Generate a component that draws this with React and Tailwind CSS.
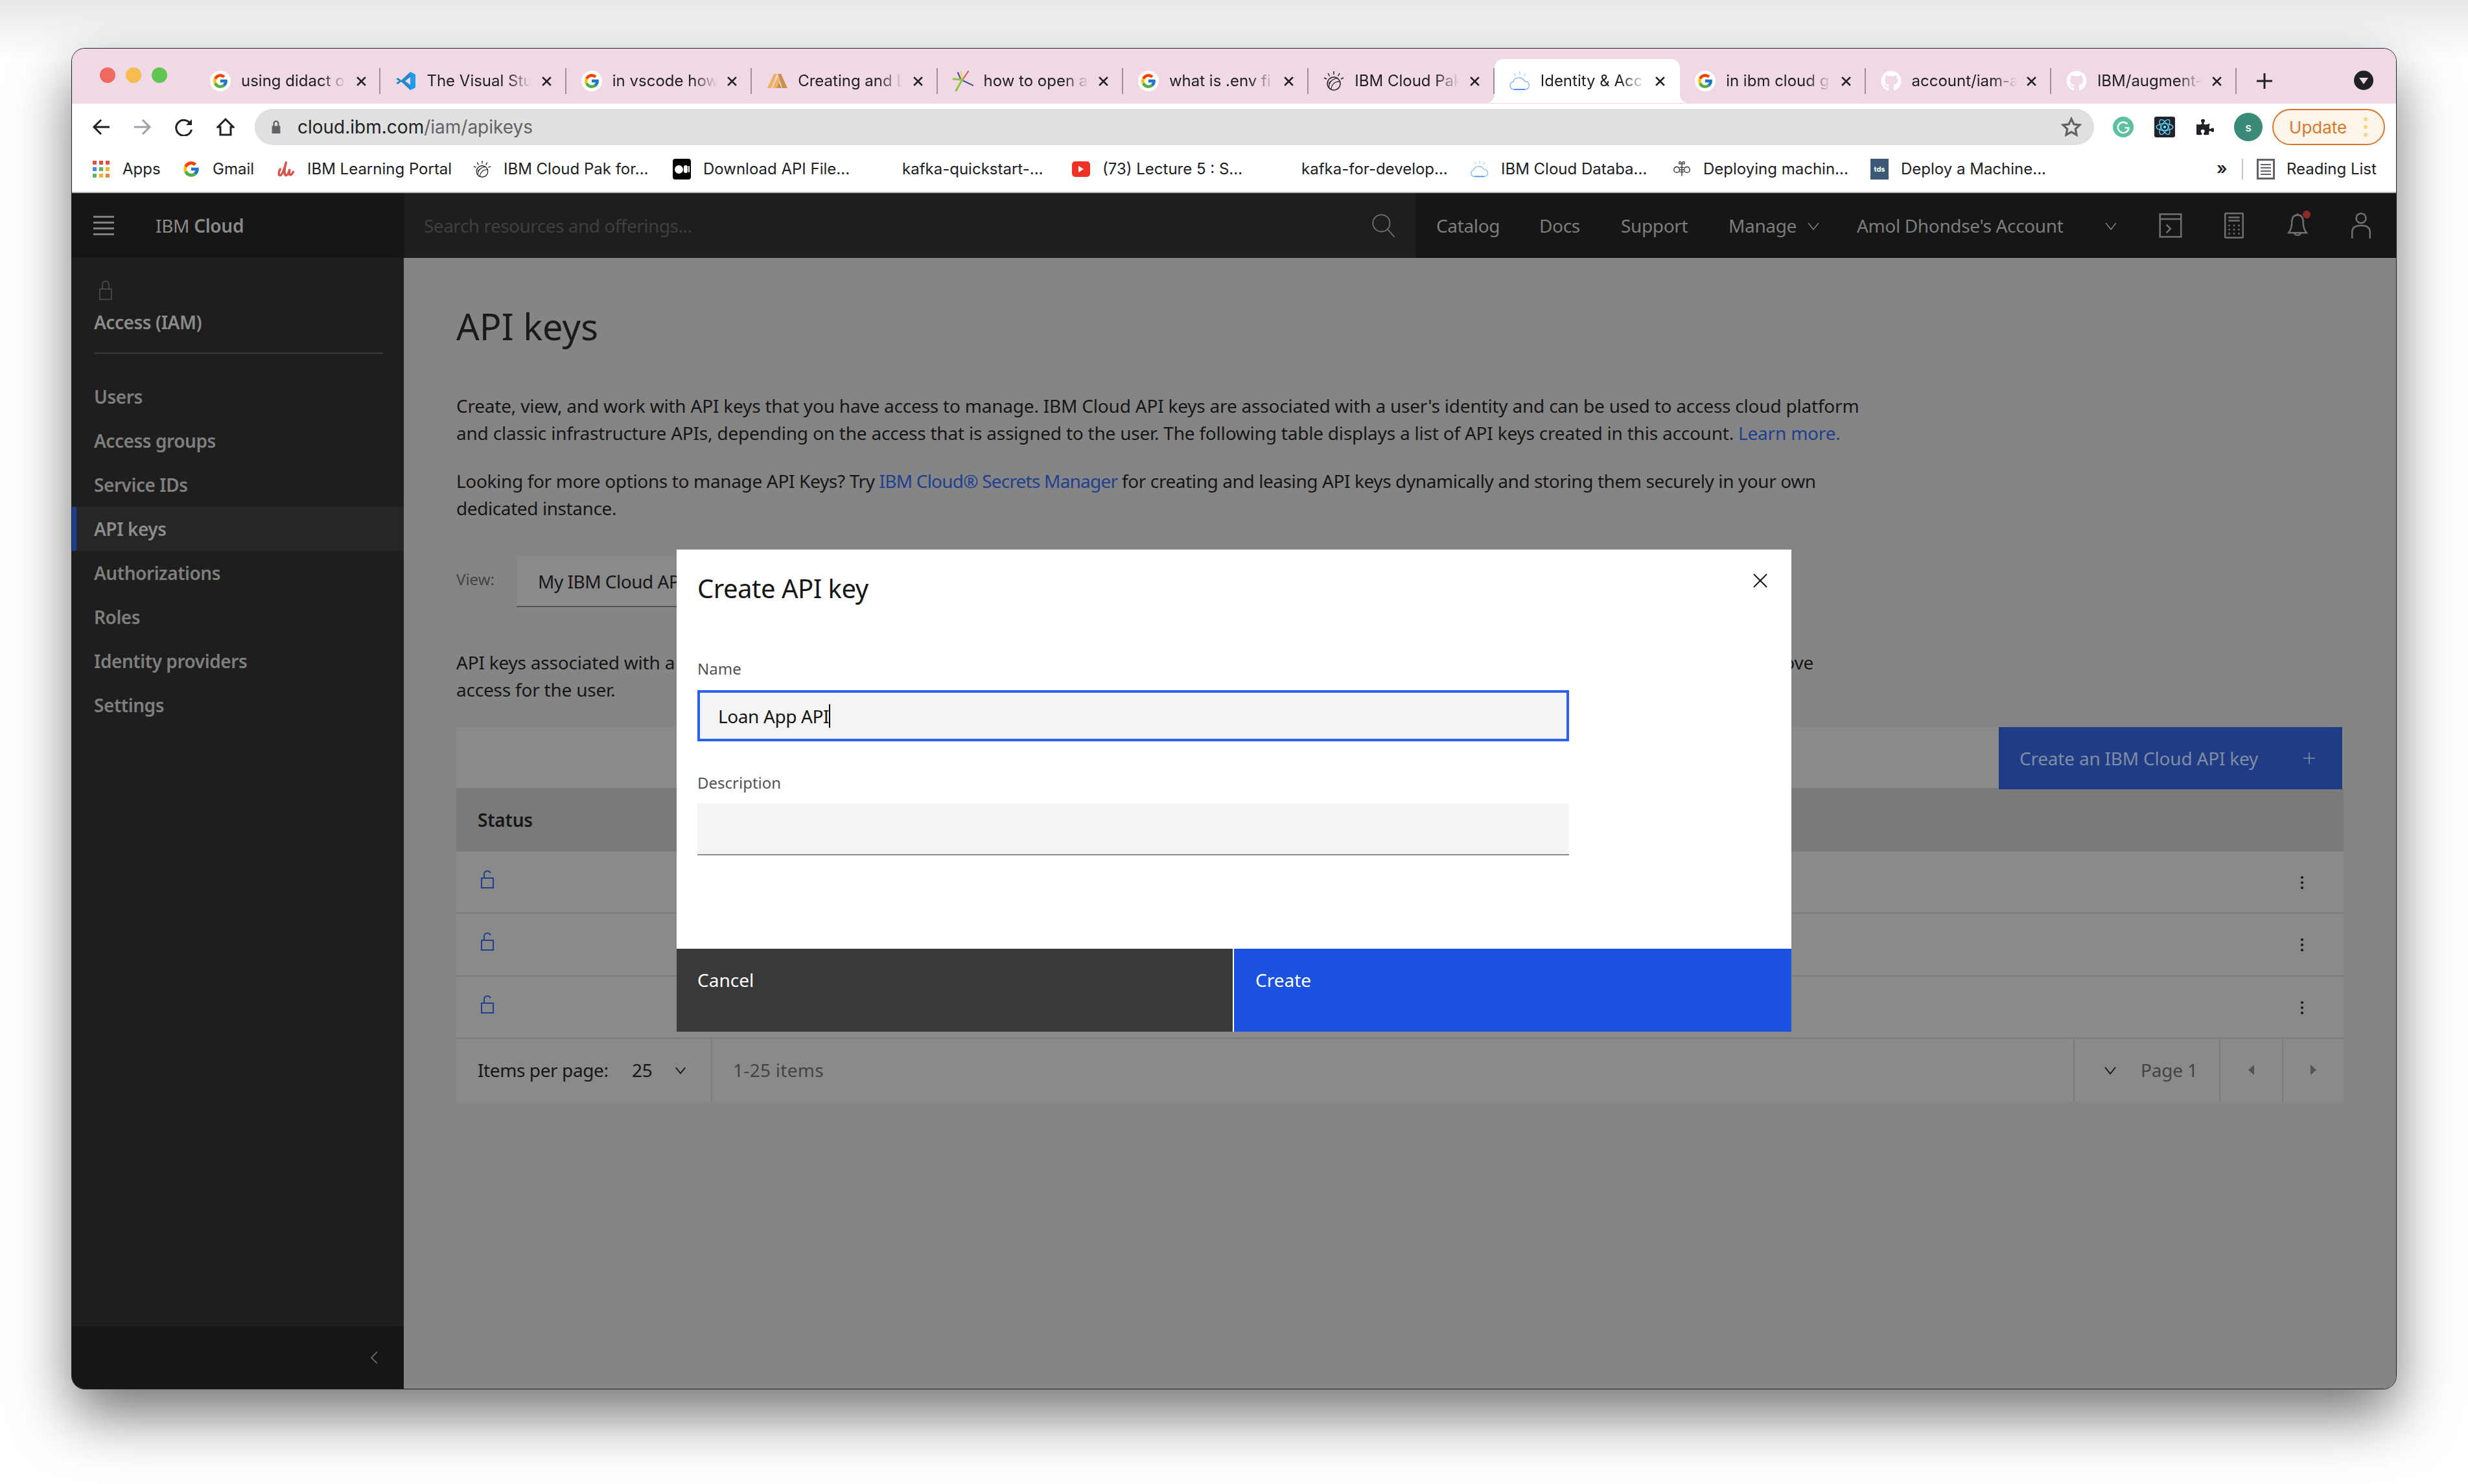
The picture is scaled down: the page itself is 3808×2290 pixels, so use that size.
import React from "react";
import { FcGoogle } from "react-icons/fc";
import { FaGithub, FaPuzzlePiece } from "react-icons/fa";

const plex = "font-['Noto_Sans',sans-serif]";
const chrome = "font-['Inter',sans-serif]";

const tabs = [
  { title: "using didact o", icon: "google" },
  { title: "The Visual Stu", icon: "vscode" },
  { title: "in vscode how", icon: "google" },
  { title: "Creating and L", icon: "alloy" },
  { title: "how to open a", icon: "spark" },
  { title: "what is .env fi", icon: "google" },
  { title: "IBM Cloud Pak", icon: "bee" },
  { title: "Identity & Acc", icon: "cloud", active: true },
  { title: "in ibm cloud g", icon: "google" },
  { title: "account/iam-a", icon: "github" },
  { title: "IBM/augment-", icon: "github" },
];

const bookmarks = [
  { title: "Apps", icon: "apps", w: "w-[139px]" },
  { title: "Gmail", icon: "gplain", w: "w-[146px]" },
  { title: "IBM Learning Portal", icon: "learn", w: "w-[303px]" },
  { title: "IBM Cloud Pak for...", icon: "bee", w: "w-[308px]" },
  { title: "Download API File...", icon: "medium", w: "w-[307px]" },
  { title: "kafka-quickstart-...", icon: "none", w: "w-[309px]" },
  { title: "(73) Lecture 5 : S...", icon: "youtube", w: "w-[307px]" },
  { title: "kafka-for-develop...", icon: "none", w: "w-[308px]" },
  { title: "IBM Cloud Databa...", icon: "cloud", w: "w-[312px]" },
  { title: "Deploying machin...", icon: "hive", w: "w-[305px]" },
  { title: "Deploy a Machine...", icon: "tds", w: "w-[480px]" },
];

const sideItems = ["Users", "Access groups", "Service IDs", "API keys", "Authorizations", "Roles", "Identity providers", "Settings"];

function Bee({ className = "w-8 h-8" }) {
  return (
    <svg viewBox="0 0 32 32" className={className} fill="none" stroke="#222" strokeWidth="1.5">
      <circle cx="16" cy="20" r="10" />
      <path d="M9 27c-2-6 3-14 12-15M12 29c0-6 5-13 13-12M8 20c3-4 7-7 12-8" strokeWidth="1.2" />
      <path d="M16 1v5M7 4l2.5 4.5M25 4l-2.5 4.5M1 11l4 2M31 11l-4 2" />
    </svg>
  );
}

function Cloud({ className = "w-8 h-8" }) {
  return (
    <svg viewBox="0 0 32 32" className={className} fill="none" strokeWidth="1.4">
      <path d="M7 29c-4 0-6-2.500-6-6 0-3 2-5 4.500-5.500C7 13 11 10.500 15.500 11c3.500.4 6.500 2.500 8 5.500 4-.4 7 2.500 7 6s-2.500 6.500-6 6.500z" stroke="#7fb8f5" />
      <path d="M7 29h17" stroke="#4a90f0" strokeWidth="2" />
      <path d="M16 1v5M7 4l2.500 4M25 4l-2.500 4" stroke="#8de0e8" />
    </svg>
  );
}

function Favicon({ name }) {
  if (name === "google")
    return (
      <span className="w-8 h-8 rounded-full bg-white flex items-center justify-center">
        <FcGoogle className="w-[26px] h-[26px]" />
      </span>
    );
  if (name === "gplain") return <FcGoogle className="w-7 h-7" />;
  if (name === "vscode")
    return (
      <svg viewBox="0 0 32 32" className="w-8 h-8">
        <path d="M23 2l8 4v20l-8 4L9 17l-5 4-3-2 5-3-5-3 3-2 5 4z" fill="#2489ca" />
        <path d="M23 2l8 4v20l-8 4z" fill="#1f9cf0" />
        <path d="M23 10l-8 6 8 6z" fill="#f0d8e4" />
      </svg>
    );
  if (name === "alloy")
    return (
      <svg viewBox="0 0 32 32" className="w-8 h-8">
        <path d="M1 27L11 5h5L7 27z" fill="#eeb062" />
        <path d="M9 27l8-18 3 7-5 11z" fill="#eeb062" />
        <path d="M17 5h5l10 22h-8z" fill="#c98f4d" />
        <path d="M15 27l4-9 4 9z" fill="#c98f4d" />
      </svg>
    );
  if (name === "spark")
    return (
      <svg viewBox="0 0 32 32" className="w-8 h-8" fill="none" strokeLinecap="round">
        <path d="M13 15L8 3" stroke="#4a4a9a" strokeWidth="2" />
        <path d="M14 15L13 1" stroke="#e8cf5a" strokeWidth="2" />
        <path d="M15 14L24 1" stroke="#d9534f" strokeWidth="2" />
        <path d="M15 15L32 23" stroke="#4a4a9a" strokeWidth="2" />
        <path d="M16 14L1 13" stroke="#8cc63f" strokeWidth="3" />
        <path d="M14 15L5 31" stroke="#8cc63f" strokeWidth="3" />
      </svg>
    );
  if (name === "bee") return <Bee />;
  if (name === "cloud") return <Cloud />;
  if (name === "github") return <FaGithub className="w-8 h-8 text-white" />;
  if (name === "apps")
    return (
      <svg viewBox="0 0 28 28" className="w-7 h-7">
        {[
          ["#e0503e", "#e0503e", "#e0503e"],
          ["#4b86e8", "#5cb85c", "#f0b429"],
          ["#5cb85c", "#f0b429", "#e8873a"],
        ].map((row, y) =>
          row.map((c, x) => <rect key={x + "-" + y} x={1 + x * 10} y={1 + y * 10} width="6" height="6" fill={c} />)
        )}
      </svg>
    );
  if (name === "learn")
    return (
      <svg viewBox="0 0 32 32" className="w-8 h-8" fill="none" stroke="#d9534f" strokeWidth="4" strokeLinecap="round">
        <path d="M6 16c-3 6-3 11 0 11 4 0 8-14 11-24-3 8-5 22-1 24 3 1 6-8 7-11-1 5-2 10 1 10 2 0 4-3 5-5" />
      </svg>
    );
  if (name === "medium")
    return (
      <span className="w-8 h-8 rounded bg-black flex items-center justify-center gap-[1px]">
        <span className="w-[13px] h-[13px] rounded-full bg-white" />
        <span className="w-[6px] h-[12px] rounded-full bg-white" />
        <span className="w-[2px] h-[10px] rounded-full bg-white" />
      </span>
    );
  if (name === "youtube")
    return (
      <span className="w-7 h-[24px] rounded-[5px] bg-[#ee3124] flex items-center justify-center">
        <span className="w-0 h-0 border-y-[5px] border-y-transparent border-l-[8px] border-l-white" />
      </span>
    );
  if (name === "hive")
    return (
      <svg viewBox="0 0 32 32" className="w-7 h-7" fill="none" stroke="#333" strokeWidth="1.6">
        <circle cx="7" cy="17" r="5" />
        <circle cx="25" cy="17" r="5" />
        <path d="M12 13h8M12 17h8M12 21h8M16 6v22" />
        <circle cx="13" cy="5" r="2" />
        <circle cx="19" cy="5" r="2" />
      </svg>
    );
  if (name === "tds")
    return <span className="w-8 h-8 bg-[#3c5876] text-white text-[11px] font-bold flex items-center justify-center">tds</span>;
  return null;
}

function Tab({ tab }) {
  return (
    <div
      className={
        tab.active
          ? "relative w-[286.400px] h-[68px] mt-[16px] rounded-t-[14px] bg-white flex items-center before:absolute before:-left-[14px] before:bottom-0 before:w-[14px] before:h-[14px] before:bg-[radial-gradient(circle_at_0_0,#f0d8e4_14px,#ffffff_14.500px)] after:absolute after:-right-[14px] after:bottom-0 after:w-[14px] after:h-[14px] after:bg-[radial-gradient(circle_at_100%_0,#f0d8e4_14px,#ffffff_14.500px)]"
          : "w-[286.400px] h-[68px] mt-[16px] flex items-center"
      }
    >
      <span className="w-[71px] pl-[23px] shrink-0 flex items-center">
        <Favicon name={tab.icon} />
      </span>
      <span className="w-[165px] shrink-0 overflow-hidden whitespace-nowrap text-[24px] text-[#202124] [mask-image:linear-gradient(to_right,black_75%,transparent_98%)]">
        {tab.title}
      </span>
      <span className="w-[26px] ml-[7px] shrink-0 flex justify-center">
        <svg viewBox="0 0 16 16" className="w-[17px] h-[17px]" stroke="#202124" strokeWidth="2.600">
          <path d="M2 2l12 12M14 2L2 14" />
        </svg>
      </span>
      <span className="flex-1" />
      {!tab.active && <span className="w-[2px] h-[40px] bg-[#a08f99] shrink-0" />}
    </div>
  );
}

function ThinIcon({ children, className = "w-10 h-10", color = "#707070", sw = 2 }) {
  return (
    <svg viewBox="0 0 32 32" className={className} fill="none" stroke={color} strokeWidth={sw}>
      {children}
    </svg>
  );
}

function Chevron({ className = "w-5 h-5", color = "#808080", sw = 1.500 }) {
  return (
    <svg viewBox="0 0 20 20" className={className} fill="none" stroke={color} strokeWidth={sw}>
      <path d="M2 6l8 10 8-10" />
    </svg>
  );
}

function UnlockIcon() {
  return (
    <svg viewBox="0 0 20 28" className="w-5 h-[28px]" fill="none" stroke="#1f3f8f" strokeWidth="2">
      <rect x="1" y="12" width="18" height="15" />
      <path d="M5 12V6c0-3 2-5 5-5 2.500 0 4 1.200 4.700 3" />
    </svg>
  );
}

function Kebab() {
  return (
    <span className="flex flex-col gap-[4px] mt-[10px]">
      <span className="w-1 h-1 rounded-full bg-[#161616]" />
      <span className="w-1 h-1 rounded-full bg-[#161616]" />
      <span className="w-1 h-1 rounded-full bg-[#161616]" />
    </span>
  );
}

export default function App() {
  return (
    <div className="w-[3808px] h-[2290px] bg-white overflow-hidden pt-[75px] pl-[111px] bg-gradient-to-b from-[#e8e8e8] to-white to-[4%]">
      <div className="relative w-[3586px] h-[2068px] rounded-[20px] overflow-hidden flex flex-col shadow-[0_40px_90px_rgba(0,0,0,0.55)] ring-1 ring-[#222]">
        {/* tab strip */}
        <div className={`${chrome} h-[85px] bg-[#f0d8e4] flex shrink-0`}>
          <div className="w-[190px] h-[85px] pl-[43px] flex items-center gap-[16px] pb-[4px]">
            <span className="w-6 h-6 rounded-full bg-[#f0695e]" />
            <span className="w-6 h-6 rounded-full bg-[#f5bd4f]" />
            <span className="w-6 h-6 rounded-full bg-[#61c554]" />
          </div>
          {tabs.map((t, i) => (
            <Tab key={i} tab={t} />
          ))}
          <span className="ml-[31px] mt-[38px] h-[24px] w-[24px] flex items-center justify-center">
            <svg viewBox="0 0 24 24" className="w-6 h-6" stroke="#202124" strokeWidth="3">
              <path d="M12 0v24M0 12h24" />
            </svg>
          </span>
          <span className="ml-[126px] mt-[34px] w-[30px] h-[30px] rounded-full bg-[#202124] flex items-center justify-center">
            <span className="w-0 h-0 border-x-[7px] border-x-transparent border-t-[10px] border-t-[#f0d8e4] mt-[2px]" />
          </span>
        </div>

        {/* address bar */}
        <div className={`${chrome} h-[72px] bg-white flex items-center shrink-0`}>
          <div className="w-[282px] pl-[31px] flex items-center gap-[36px]">
            <svg viewBox="0 0 28 28" className="w-7 h-7" fill="none" stroke="#202124" strokeWidth="3">
              <path d="M27 14H3M14 3L3 14l11 11" />
            </svg>
            <svg viewBox="0 0 28 28" className="w-7 h-7" fill="none" stroke="#9aa0a6" strokeWidth="3">
              <path d="M1 14h24M14 3l11 11-11 11" />
            </svg>
            <svg viewBox="0 0 28 28" className="w-7 h-7" fill="none" stroke="#202124" strokeWidth="3">
              <path d="M24 9a12 12 0 1 0 1.500 9" />
              <path d="M26 2v9H17z" fill="#202124" stroke="none" />
            </svg>
            <svg viewBox="0 0 28 28" className="w-7 h-7" fill="none" stroke="#202124" strokeWidth="3">
              <path d="M14 2L2 14h4v12h16V14h4z" />
            </svg>
          </div>
          <div className="w-[2838px] h-[56px] rounded-full bg-[#e0e0e0] flex items-center pl-[25px] pr-[19px]">
            <svg viewBox="0 0 16 24" className="w-[16px] h-[22px] mr-[25px]" fill="#5f6368">
              <path d="M3 10V6a5 5 0 0 1 10 0v4h2v13H1V10zM5.500 10h5V6a2.500 2.500 0 0 0-5 0z" />
            </svg>
            <span className="text-[28px] text-[#202124] whitespace-nowrap">
              cloud.ibm.com<span className="text-[#5f6368]">/iam/apikeys</span>
            </span>
            <svg viewBox="0 0 24 24" className="w-8 h-8 ml-auto" fill="none" stroke="#5f6368" strokeWidth="2.400">
              <path d="M12 2.500l2.900 6.300 6.800.8-5 4.700 1.300 6.800-6-3.400-6 3.400 1.300-6.800-5-4.700 6.800-.8z" />
            </svg>
          </div>
          <div className="flex items-center w-[449px] pl-[29px]">
            <span className="w-8 h-8 rounded-full bg-[#5cc29d] flex items-center justify-center">
              <svg viewBox="0 0 20 20" className="w-[22px] h-[22px]" fill="none" stroke="#fff" strokeWidth="2.200">
                <path d="M16 6a7.500 7.500 0 1 0 1.500 6M17.500 15v-4H12" />
              </svg>
            </span>
            <span className="ml-[32px] w-8 h-8 rounded-[3px] bg-[#20232a] flex items-center justify-center">
              <svg viewBox="-12 -12 24 24" className="w-7 h-7" fill="none" stroke="#61dafb" strokeWidth="1.100">
                <ellipse rx="11" ry="4.500" />
                <ellipse rx="11" ry="4.500" transform="rotate(60)" />
                <ellipse rx="11" ry="4.500" transform="rotate(120)" />
                <circle r="2" fill="#61dafb" stroke="none" />
              </svg>
            </span>
            <FaPuzzlePiece className="ml-[33px] w-7 h-7 text-[#202124]" />
            <span className="ml-[31px] w-11 h-11 rounded-full bg-[#3b8a78] text-white text-[18px] font-medium flex items-center justify-center">s</span>
            <span className="ml-[15px] w-[175px] h-[56px] rounded-full border-2 border-[#d9772b] bg-[#fdf4ea] flex items-center pl-[24px] text-[26px] text-[#d9772b]">
              Update
              <span className="ml-[26px] flex flex-col gap-[6px]">
                <span className="w-[6px] h-[6px] rounded-full bg-[#f8d77a]" />
                <span className="w-[6px] h-[6px] rounded-full bg-[#f8d77a]" />
                <span className="w-[6px] h-[6px] rounded-full bg-[#f8d77a]" />
              </span>
            </span>
          </div>
        </div>

        {/* bookmarks */}
        <div className={`${chrome} h-[66px] bg-white flex items-center pl-[31px] pb-[6px] text-[24px] text-[#202124] border-b-2 border-[#b5b5b5] shrink-0`}>
          {bookmarks.map((b, i) => (
            <div key={i} className={`${b.w} flex items-center whitespace-nowrap shrink-0`}>
              <span className="w-7 h-8 mr-[19px] flex items-center justify-center shrink-0">
                <Favicon name={b.icon} />
              </span>
              {b.title}
            </div>
          ))}
          <span className="w-[28px] ml-[54px] text-[26px] font-semibold mb-[4px]">»</span>
          <span className="ml-[11px] w-[2px] h-[32px] bg-[#c4c4c4] shrink-0" />
          <span className="ml-[21px] w-[28px] h-[32px] border-[3px] border-[#5f6368] flex flex-col justify-center gap-[3px] px-[3px] shrink-0">
            <span className="h-[2px] bg-[#5f6368]" />
            <span className="h-[2px] bg-[#5f6368]" />
            <span className="h-[2px] bg-[#5f6368]" />
            <span className="h-[2px] bg-[#5f6368]" />
          </span>
          <span className="ml-[18px] whitespace-nowrap">Reading List</span>
        </div>

        {/* ibm cloud header */}
        <div className={`${plex} h-[100px] flex shrink-0 text-[28px] text-[#7d7d7d] bg-[#161616]`}>
          <div className="w-[513px] flex items-center pl-[33px]">
            <span className="flex flex-col gap-[6px] w-8">
              <span className="h-[3px] bg-[#808080]" />
              <span className="h-[3px] bg-[#808080]" />
              <span className="h-[3px] bg-[#808080]" />
              <span className="h-[3px] bg-[#808080]" />
            </span>
            <span className="ml-[64px] text-[#8a8a8a] tracking-[-0.3px]">
              IBM <span className="font-semibold">Cloud</span>
            </span>
          </div>
          <div className="w-[1560px] bg-[#1e1e1e] flex items-center pl-[30px] pr-[30px] justify-between">
            <span className="text-[#3f3f3f] tracking-[-0.5px]">Search resources and offerings...</span>
            <ThinIcon className="w-[38px] h-[38px]" sw={1.500}>
              <circle cx="13" cy="13" r="11" />
              <path d="M21 21l9 10" />
            </ThinIcon>
          </div>
          <div className="flex items-center flex-1 pl-[32px] tracking-[-0.35px]">
            <span className="w-[159px]">Catalog</span>
            <span className="w-[126px]">Docs</span>
            <span className="w-[166px]">Support</span>
            <span className="w-[198px] flex items-center whitespace-nowrap">
              Manage
              <Chevron className="ml-[16px] w-5 h-5" />
            </span>
            <span className="w-[435px] flex items-center whitespace-nowrap relative">
              Amol Dhondse's Account
              <Chevron className="absolute left-[382px] w-5 h-5" />
            </span>
            <span className="w-[98px] flex justify-center">
              <ThinIcon>
                <rect x="3" y="2" width="26" height="28" />
                <path d="M3 8h26M11 15l5 5-5 5" />
              </ThinIcon>
            </span>
            <span className="w-[98px] flex justify-center">
              <ThinIcon>
                <rect x="5" y="1" width="22" height="30" rx="1" />
                <path d="M9 6h14M9 10h14" />
                <path d="M9 16h2M15 16h2M21 16h2M9 21h2M15 21h2M21 21h2M9 26h2M15 26h2M21 26h2" />
              </ThinIcon>
            </span>
            <span className="w-[98px] flex justify-center relative">
              <ThinIcon>
                <path d="M16 3c-5 0-7 4-7 9 0 6-1 9-4 13h22c-3-4-4-7-4-13 0-5-2-9-7-9zM16 1v2M12 25c0 4 8 4 8 0" />
              </ThinIcon>
              <span className="absolute top-[-3px] left-[57px] w-[12px] h-[12px] rounded-full bg-[#8e2a25]" />
            </span>
            <span className="w-[98px] flex justify-center">
              <ThinIcon>
                <circle cx="16" cy="7" r="6" />
                <path d="M5 32v-8c0-6 5-8 11-8s11 2 11 8v8" />
              </ThinIcon>
            </span>
          </div>
        </div>

        <div className={`${plex} flex flex-1 min-h-0`}>
          {/* side nav */}
          <aside className="w-[513px] bg-[#1e1e1e] flex flex-col text-[28px] font-semibold tracking-[-0.45px] text-[#7f7f7f]">
            <div className="pl-[34px] pr-[32px] pt-[35px]">
              <svg viewBox="0 0 20 30" className="w-5 h-[30px] ml-[8px]" fill="none" stroke="#444" strokeWidth="2">
                <rect x="1" y="13" width="18" height="16" />
                <path d="M5 13V6c0-3 2-5 5-5s5 2 5 5v7" />
              </svg>
              <div className="mt-[16px] leading-[36px] text-[#8c8c8c]">Access (IAM)</div>
              <div className="mt-[29px] h-[2px] bg-[#3a3a3a]" />
            </div>
            <nav className="mt-[32px]">
              {sideItems.map((s) => (
                <div
                  key={s}
                  className={
                    s === "API keys"
                      ? "h-[68px] flex items-center bg-[#262626] border-l-[7px] border-[#1d3f8f] pl-[27px] text-[#8c8c8c]"
                      : "h-[68px] flex items-center pl-[34px]"
                  }
                >
                  {s}
                </div>
              ))}
            </nav>
            <div className="mt-auto h-[96px] bg-[#161616] flex items-center justify-end pr-[40px]">
              <svg viewBox="0 0 12 20" className="w-3 h-5" fill="none" stroke="#7a7a7a" strokeWidth="1.500">
                <path d="M11 1L2 10l9 9" />
              </svg>
            </div>
          </aside>

          {/* page */}
          <main className="flex-1 bg-[#858585] pl-[81px] pr-[81px] pt-[70px] text-[#161616] text-[28px] leading-[42px] tracking-[-0.21px]">
            <h1 className="text-[56px] leading-[70px] font-normal tracking-normal text-[#1a1a1a]">API keys</h1>
            <p className="mt-[67px] whitespace-nowrap">
              Create, view, and work with API keys that you have access to manage. IBM Cloud API keys are associated with a user's identity and can be used to access cloud platform
              <br />
              and classic infrastructure APIs, depending on the access that is assigned to the user. The following table displays a list of API keys created in this account.{" "}
              <span className="text-[#1f3f8f]">Learn more.</span>
            </p>
            <p className="mt-[32px] whitespace-nowrap tracking-[-0.41px]">
              <span className="tracking-[-0.35px]">Looking for more options to manage API Keys? Try </span>
              <span className="text-[#1f3f8f] tracking-[-0.79px]">IBM Cloud® Secrets Manager</span> for creating and leasing API keys dynamically and storing them securely in your own
              <br />
              dedicated instance.
            </p>
            <div className="mt-[53px] flex">
              <span className="w-[93px] text-[24px] leading-[72px] tracking-normal text-[#444]">View:</span>
              <div className="w-[300px] h-[79px] bg-[#8a8a8a] border-b-2 border-[#555] pl-[33px] flex items-center whitespace-nowrap tracking-[-0.5px]">
                My IBM Cloud AP
              </div>
            </div>
            <div className="mt-[64px] w-[2094px]">
              <div className="flex justify-between whitespace-nowrap">
                <span>API keys associated with a</span>
                <span>ove</span>
              </div>
              <div>access for the user.</div>
            </div>

            {/* table */}
            <div className="mt-[37px] w-[2912px]">
              <div className="h-[94px] bg-[#8a8a8a] flex justify-end pr-[2px]">
                <div className="relative z-10 w-[530px] h-[96px] bg-[#1f3c85] flex items-center pl-[32px] text-[#808da5]">
                  Create an IBM Cloud API key
                  <span className="absolute left-[470px] w-[18px] h-[18px]">
                    <svg viewBox="0 0 18 18" className="w-[18px] h-[18px]" stroke="#808da5" strokeWidth="1.600">
                      <path d="M9 0v18M0 9h18" />
                    </svg>
                  </span>
                </div>
              </div>
              <div className="h-[98px] bg-[#7a7a7a] flex items-center pl-[33px] font-semibold text-[#161616]">Status</div>
              {[0, 1, 2].map((i) => (
                <div key={i} className="h-[96.330px] bg-[#8a8a8a] border-b-2 border-[#7c7c7c] flex items-center justify-between pl-[38px] pr-[62px] pb-[8px]">
                  <UnlockIcon />
                  <Kebab />
                </div>
              ))}
              <div className="h-[97px] bg-[#8a8a8a] flex items-center">
                <div className="w-[395px] h-full flex items-center pl-[33px] border-r-2 border-[#7c7c7c]">
                  <span className="whitespace-nowrap tracking-[-0.4px]">Items per page:</span>
                  <span className="absolute left-[864px]">25</span>
                  <Chevron className="absolute left-[930px] w-[18px] h-[18px]" color="#161616" sw={2} />
                </div>
                <span className="ml-[32px] text-[#444] tracking-[0.3px]">1-25 items</span>
                <div className="ml-auto h-full flex items-center text-[#444]">
                  <div className="w-[225px] h-full border-l-2 border-[#7c7c7c] flex items-center pl-[45px]">
                    <Chevron className="w-5 h-5 mr-[37px] shrink-0" color="#161616" sw={2} />
                    <span className="whitespace-nowrap">Page 1</span>
                  </div>
                  <div className="w-[97px] h-full border-l-2 border-[#7c7c7c] flex items-center justify-center">
                    <span className="w-0 h-0 border-y-[8px] border-y-transparent border-r-[9px] border-r-[#555]" />
                  </div>
                  <div className="w-[95px] h-full border-l-2 border-[#7c7c7c] flex items-center justify-center">
                    <span className="w-0 h-0 border-y-[8px] border-y-transparent border-l-[9px] border-l-[#555]" />
                  </div>
                </div>
              </div>
            </div>
          </main>
        </div>

        {/* modal */}
        <div className={`${plex} absolute z-20 left-[933px] top-[773px] w-[1720px] h-[744px] bg-white flex flex-col text-[#161616]`}>
          <button className="absolute left-[1661px] top-[37px] w-[22px] h-[22px]">
            <svg viewBox="0 0 22 22" className="w-[22px] h-[22px]" stroke="#161616" strokeWidth="2">
              <path d="M1 1l20 20M21 1L1 21" />
            </svg>
          </button>
          <div className="pl-[32px] pt-[36px]">
            <h2 className="text-[40px] leading-[48px] font-normal tracking-[-0.5px]">Create API key</h2>
            <label className="block mt-[84px] text-[24px] leading-[32px] text-[#525252]">Name</label>
            <div className="mt-[17px] w-[1345px] h-[79px] bg-[#f4f4f4] border-[4px] border-[#2a62f0] pl-[28px] flex items-center text-[28px] tracking-[-0.4px]">
              Loan App API<span className="w-[2px] h-[36px] bg-black" />
            </div>
            <label className="block mt-[48px] text-[24px] leading-[32px] text-[#525252]">Description</label>
            <div className="mt-[16px] w-[1345px] h-[80px] bg-[#f4f4f4] border-b-2 border-[#8d8d8d]" />
          </div>
          <div className="mt-auto h-[128px] flex text-[28px] text-white">
            <div className="w-[858px] bg-[#393939] pl-[32px] pt-[30px] leading-[36px]">Cancel</div>
            <div className="ml-[2px] flex-1 bg-[#1c52e0] pl-[33px] pt-[30px] leading-[36px]">Create</div>
          </div>
        </div>
      </div>
    </div>
  );
}
